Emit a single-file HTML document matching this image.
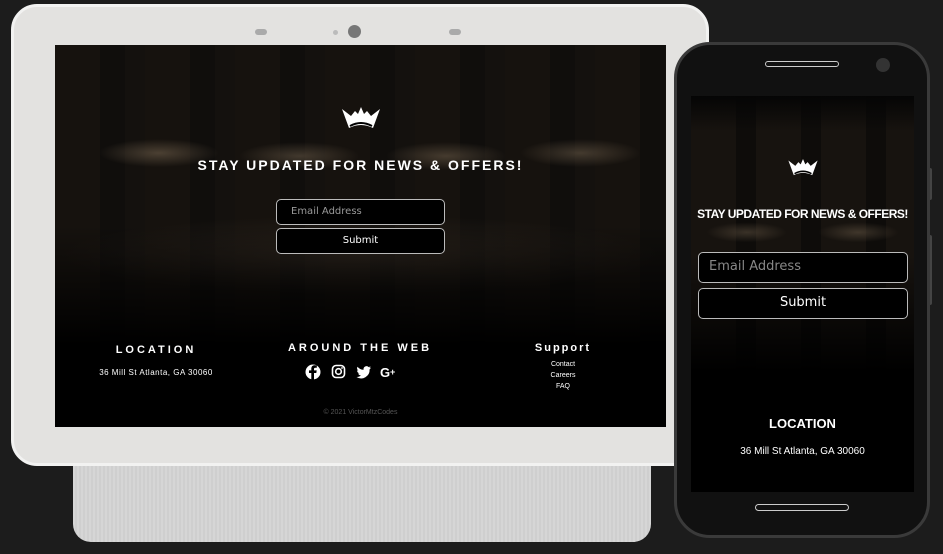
<!DOCTYPE html>
<html><head><meta charset="utf-8"><style>
*{margin:0;padding:0;box-sizing:border-box}
body{width:943px;height:554px;background:#1c1c1c;position:relative;overflow:hidden;font-family:"Liberation Sans",sans-serif;color:#fff}
.abs{position:absolute}
.tab{left:11px;top:4px;width:698px;height:462px;background:#e3e2e0;border-radius:26px;border:3px solid #f2f2f1}
.base{left:73px;top:462px;width:578px;height:80px;background:repeating-linear-gradient(90deg,#d6d6d6 0 2px,#cfcfcf 2px 4px);border-radius:0 0 18px 18px}
.scr{left:55px;top:45px;width:611px;height:382px;background:#000;overflow:hidden}
.photo{left:0;top:0;width:100%;height:300px;background:
linear-gradient(180deg,rgba(0,0,0,0) 60%,#000 100%),
radial-gradient(ellipse 60px 14px at 17% 36%,rgba(140,120,95,.45),transparent),
radial-gradient(ellipse 60px 14px at 40% 37%,rgba(140,120,95,.4),transparent),
radial-gradient(ellipse 60px 14px at 64% 37%,rgba(140,120,95,.4),transparent),
radial-gradient(ellipse 60px 14px at 86% 36%,rgba(140,120,95,.4),transparent),
radial-gradient(ellipse 300px 40px at 50% 70%,rgba(60,50,40,.5),transparent),
repeating-linear-gradient(90deg,#16120e 0 45px,#100e0c 45px 70px,#14110e 70px 90px);}
.t{font-weight:bold;letter-spacing:2px;text-align:center}
.inp{border:1px solid #bbb;border-radius:5px;background:#000;font-family:"DejaVu Sans",sans-serif}
.phone{left:674px;top:42px;width:256px;height:496px;background:#111;border-radius:36px;border:3px solid #3a3a3a}
.pscr{left:691px;top:96px;width:223px;height:396px;background:#000;overflow:hidden}
</style></head><body>
<div class="abs base"></div>
<div class="abs tab"></div>
<div class="abs" style="left:255px;top:29px;width:12px;height:6px;border-radius:3px;background:#aaa"></div>
<div class="abs" style="left:449px;top:29px;width:12px;height:6px;border-radius:3px;background:#aaa"></div>
<div class="abs" style="left:333px;top:30px;width:5px;height:5px;border-radius:50%;background:#bbb"></div>
<div class="abs" style="left:348px;top:25px;width:13px;height:13px;border-radius:50%;background:#777"></div>
<div class="abs scr">
 <div class="abs photo"></div>
 <svg class="abs" style="left:287px;top:62px" width="38" height="26" viewBox="0 0 38 26"><path d="M0 2l9 7 4-5 3 3 3-7 3 7 3-3 4 5 9-7-7 19q-12-6-24 0z" fill="#fff"/><path d="M8 19q11-6 22 0" stroke="#000" stroke-width="2" fill="none"/></svg>
 <div class="abs t" style="left:0;width:611px;top:112px;font-size:14px">STAY UPDATED FOR NEWS &amp; OFFERS!</div>
 <div class="abs inp" style="left:221px;top:154px;width:169px;height:26px;color:#999;font-size:10px;padding:6px 14px">Email Address</div>
 <div class="abs inp" style="left:221px;top:183px;width:169px;height:26px;font-size:10px;text-align:center;padding-top:6px">Submit</div>
 <div class="abs t" style="left:40px;width:122px;top:299px;font-size:11px;letter-spacing:3px">LOCATION</div>
 <div class="abs" style="left:20px;width:162px;top:323px;font-size:8px;text-align:center;letter-spacing:.5px">36 Mill St Atlanta, GA 30060</div>
 <div class="abs t" style="left:215px;width:180px;top:297px;font-size:11px;letter-spacing:3px">AROUND THE WEB</div>
 <svg class="abs" style="left:250px;top:319px" width="100" height="16" viewBox="0 0 100 16">
  <circle cx="8" cy="8" r="7.5" fill="#fff"/><path d="M9 16V9h2.3l.4-2.6H9V5c0-.8.3-1.3 1.4-1.3h1.4V1.4Q10.8 1.2 9.7 1.2C7.6 1.2 6.3 2.4 6.3 4.7v1.7H4V9h2.3v7z" fill="#000"/>
  <rect x="27.5" y="1.5" width="12" height="12" rx="3.5" fill="none" stroke="#fff" stroke-width="1.6"/><circle cx="33.5" cy="7.5" r="2.8" fill="none" stroke="#fff" stroke-width="1.6"/><circle cx="37" cy="4" r=".9" fill="#fff"/>
  <path d="M66 3.5q-.8.4-1.7.5.9-.6 1.3-1.6-.9.5-1.9.7a3 3 0 0 0-5.1 2.7 8.5 8.5 0 0 1-6.1-3.1 3 3 0 0 0 .9 4q-.7 0-1.3-.4a3 3 0 0 0 2.4 3q-.7.2-1.4.1a3 3 0 0 0 2.8 2A6 6 0 0 1 51.5 13a8.5 8.5 0 0 0 13.1-7.6q.9-.6 1.4-1.9z" fill="#fff"/>
  <text x="75" y="13" font-family="Liberation Sans" font-weight="bold" font-size="13" fill="#fff">G</text><text x="85" y="11" font-family="Liberation Sans" font-weight="bold" font-size="9" fill="#fff">+</text>
 </svg>
 <div class="abs t" style="left:460px;width:96px;top:297px;font-size:11px;letter-spacing:2px">Support</div>
 <div class="abs" style="left:460px;width:96px;top:314px;font-size:7px;text-align:center;line-height:11px">Contact<br>Careers<br>FAQ</div>
 <div class="abs" style="left:0;width:611px;top:364px;font-size:7px;text-align:center;color:#555">© 2021 VictorMtzCodes</div>
</div>
<div class="abs" style="left:927px;top:168px;width:5px;height:32px;background:#444;border-radius:2px"></div>
<div class="abs" style="left:927px;top:235px;width:5px;height:70px;background:#444;border-radius:2px"></div>
<div class="abs phone"></div>
<div class="abs" style="left:765px;top:61px;width:74px;height:6px;border:1px solid #ccc;border-radius:4px"></div>
<div class="abs" style="left:876px;top:58px;width:14px;height:14px;border-radius:50%;background:#333"></div>
<div class="abs" style="left:755px;top:504px;width:94px;height:7px;border:1px solid #ccc;border-radius:4px"></div>
<div class="abs pscr">
 <div class="abs" style="left:0;top:0;width:223px;height:290px;background:linear-gradient(180deg,#050505 0%,rgba(0,0,0,0) 12%,rgba(0,0,0,0) 55%,#000 95%),radial-gradient(ellipse 40px 10px at 25% 47%,rgba(140,120,95,.35),transparent),radial-gradient(ellipse 40px 10px at 75% 47%,rgba(140,120,95,.35),transparent),repeating-linear-gradient(90deg,#17130f 0 45px,#0e0c0a 45px 65px)"></div>
 <svg class="abs" style="left:97px;top:63px" width="30" height="20" viewBox="0 0 38 26"><path d="M0 2l9 7 4-5 3 3 3-7 3 7 3-3 4 5 9-7-7 19q-12-6-24 0z" fill="#fff"/><path d="M8 19q11-6 22 0" stroke="#000" stroke-width="2" fill="none"/></svg>
 <div class="abs" style="left:0;width:223px;top:111px;font-size:12px;font-weight:bold;text-align:center;letter-spacing:-.5px">STAY UPDATED FOR NEWS &amp; OFFERS!</div>
 <div class="abs inp" style="left:7px;top:156px;width:210px;height:31px;color:#888;font-size:13px;padding:6px 10px">Email Address</div>
 <div class="abs inp" style="left:7px;top:192px;width:210px;height:31px;font-size:13px;text-align:center;padding-top:6px">Submit</div>
 <div class="abs" style="left:0;width:223px;top:320px;font-size:13px;font-weight:bold;text-align:center">LOCATION</div>
 <div class="abs" style="left:0;width:223px;top:350px;font-size:10px;text-align:center">36 Mill St Atlanta, GA 30060</div>
</div>
</body></html>
